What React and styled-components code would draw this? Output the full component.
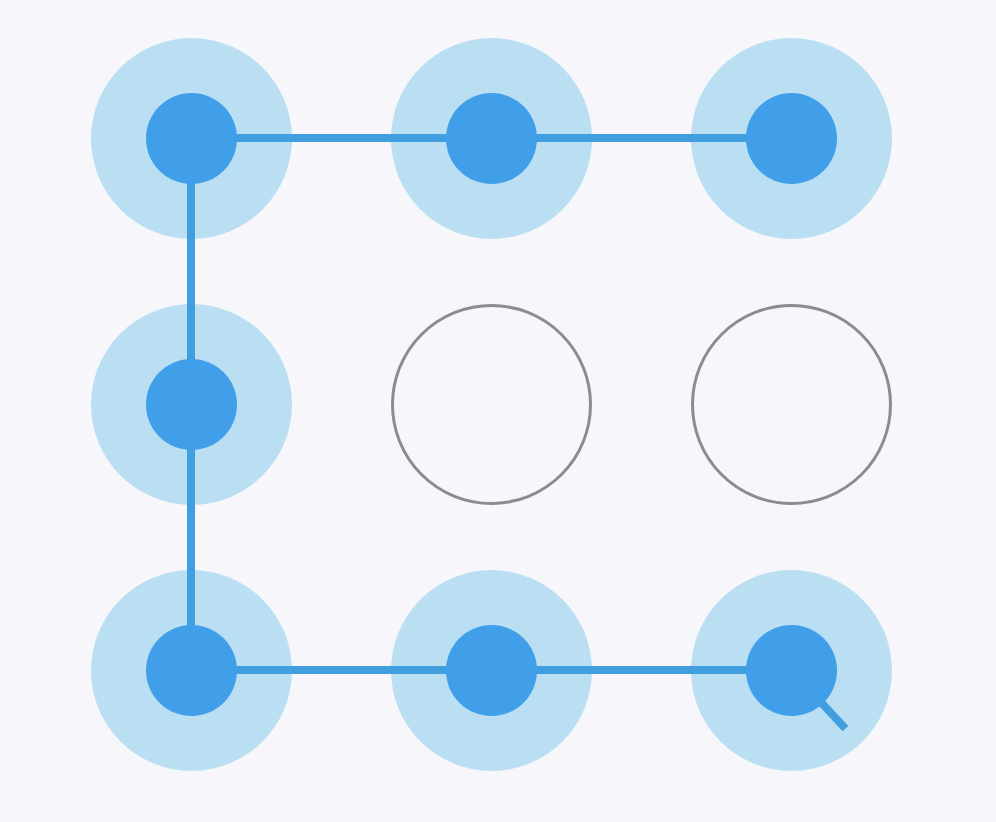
import styled, { createGlobalStyle } from "styled-components";

const GlobalStyle = createGlobalStyle`
  body {
    margin: 0;
    background-color: #f7f7fb;
  }
`;

const StyledPattern = styled.main`
  box-sizing: border-box;
  width: 996px;
  height: 822px;
  padding: 38px 0 0 91px;
  overflow: hidden;
  background-color: #f7f7fb;
`;

const Grid = styled.div`
  display: grid;
  grid-template-columns: repeat(3, 201px);
  grid-auto-rows: 201px;
  gap: 65px 99px;
`;

const Node = styled.div`
  box-sizing: border-box;
  position: relative;
  display: flex;
  justify-content: center;
  align-items: center;
  border-radius: 50%;
  border: ${(props) => (props.$active ? "none" : "3px solid #8b8b91")};
  background-color: ${(props) => (props.$active ? "#badff3" : "transparent")};
`;

const Dot = styled.div`
  position: relative;
  z-index: 2;
  width: 91px;
  height: 91px;
  border-radius: 50%;
  background-color: #419fe9;
`;

// starts at the center of the node and turns toward the next one
const Line = styled.div`
  position: absolute;
  z-index: 1;
  top: calc(50% - 4.5px);
  left: calc(50% - 0.5px);
  width: ${(props) => props.$length}px;
  height: 8px;
  background-color: #419fdf;
  transform: rotate(${(props) => props.$angle}deg);
  transform-origin: 0 50%;
`;

const nodes = [
  {
    id: 1,
    active: true,
    lines: [
      { length: 300, angle: 0 },
      { length: 266, angle: 90 },
    ],
  },
  { id: 2, active: true, lines: [{ length: 300, angle: 0 }] },
  { id: 3, active: true, lines: [] },
  { id: 4, active: true, lines: [{ length: 266, angle: 90 }] },
  { id: 5, active: false, lines: [] },
  { id: 6, active: false, lines: [] },
  { id: 7, active: true, lines: [{ length: 300, angle: 0 }] },
  { id: 8, active: true, lines: [{ length: 300, angle: 0 }] },
  { id: 9, active: true, lines: [{ length: 80, angle: 47.1 }] },
];

const App = () => {
  return (
    <>
      <GlobalStyle />
      <StyledPattern>
        <Grid>
          {nodes.map((node) => (
            <Node key={node.id} $active={node.active}>
              {node.lines.map((line) => (
                <Line
                  key={line.angle}
                  $length={line.length}
                  $angle={line.angle}
                />
              ))}
              {node.active && <Dot />}
            </Node>
          ))}
        </Grid>
      </StyledPattern>
    </>
  );
};

export default App;
